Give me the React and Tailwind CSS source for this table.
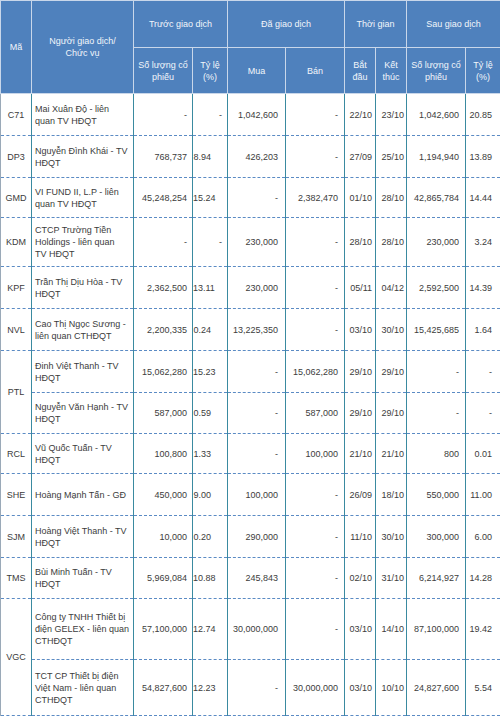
import React from "react";

const ROWS = [
  { code: "C71", span: 1, h: "h-[42px]", name: ["Mai Xuân Độ - liên", "quan TV HĐQT"], v: ["-", "-", "1,042,600", "-", "22/10", "23/10", "1,042,600", "20.85"] },
  { code: "DP3", span: 1, h: "h-[42px]", name: ["Nguyễn Đình Khái - TV", "HĐQT"], v: ["768,737", "8.94", "426,203", "-", "27/09", "25/10", "1,194,940", "13.89"] },
  { code: "GMD", span: 1, h: "h-[40px]", name: ["VI FUND II, L.P - liên", "quan TV HĐQT"], v: ["45,248,254", "15.24", "-", "2,382,470", "01/10", "28/10", "42,865,784", "14.44"] },
  { code: "KDM", span: 1, h: "h-[49px]", name: ["CTCP Trường Tiền", "Holdings - liên quan", "TV HĐQT"], v: ["-", "-", "230,000", "-", "28/10", "28/10", "230,000", "3.24"] },
  { code: "KPF", span: 1, h: "h-[42px]", name: ["Trần Thị Dịu Hòa - TV", "HĐQT"], v: ["2,362,500", "13.11", "230,000", "-", "05/11", "04/12", "2,592,500", "14.39"] },
  { code: "NVL", span: 1, h: "h-[42px]", name: ["Cao Thị Ngọc Sương -", "liên quan CTHĐQT"], v: ["2,200,335", "0.24", "13,225,350", "-", "03/10", "30/10", "15,425,685", "1.64"] },
  { code: "PTL", span: 2, h: "h-[42px]", name: ["Đinh Việt Thanh - TV", "HĐQT"], v: ["15,062,280", "15.23", "-", "15,062,280", "29/10", "29/10", "-", "-"] },
  { code: null, h: "h-[41px]", name: ["Nguyễn Văn Hạnh - TV", "HĐQT"], v: ["587,000", "0.59", "-", "587,000", "29/10", "29/10", "-", "-"] },
  { code: "RCL", span: 1, h: "h-[40px]", name: ["Vũ Quốc Tuấn - TV", "HĐQT"], v: ["100,800", "1.33", "-", "100,000", "21/10", "21/10", "800", "0.01"] },
  { code: "SHE", span: 1, h: "h-[42px]", name: ["Hoàng Mạnh Tấn - GĐ"], v: ["450,000", "9.00", "100,000", "-", "26/09", "18/10", "550,000", "11.00"] },
  { code: "SJM", span: 1, h: "h-[42px]", name: ["Hoàng Việt Thanh - TV", "HĐQT"], v: ["10,000", "0.20", "290,000", "-", "11/10", "30/10", "300,000", "6.00"] },
  { code: "TMS", span: 1, h: "h-[41px]", name: ["Bùi Minh Tuấn - TV", "HĐQT"], v: ["5,969,084", "10.88", "245,843", "-", "02/10", "31/10", "6,214,927", "14.28"] },
  { code: "VGC", span: 2, h: "h-[61px]", name: ["Công ty TNHH Thiết bị", "điện GELEX - liên quan", "CTHĐQT"], v: ["57,100,000", "12.74", "30,000,000", "-", "03/10", "14/10", "87,100,000", "19.42"] },
  { code: null, h: "h-[56px]", name: ["TCT CP Thiết bị điện", "Việt Nam - liên quan", "CTHĐQT"], v: ["54,827,600", "12.23", "-", "30,000,000", "03/10", "10/10", "24,827,600", "5.54"] },
];

const cell =
  "border-x border-x-[#3a8aa0] border-b border-b-[#5b8bc4] [border-bottom-style:dashed] align-middle";

// padding per value column
const PAD = ["pr-[5px]", "pr-[16px]", "pr-[7px]", "pr-[6px]", "pr-[3px]", "pr-[2px]", "pr-[6px]", "pr-[8px]"];

const hd = "border border-[#c9d7ea] bg-[#4f81bd] text-[#f2f6fb] text-center align-middle font-normal";

export default function App() {
  return (
    <div className="w-[500px] h-[721px] bg-white font-['Liberation_Sans',Arial,sans-serif] text-[9px] leading-[12px] text-[#3c3c3c]">
      <table className="table-fixed border-collapse w-[500px]">
        <colgroup>
          <col className="w-[31px]" />
          <col className="w-[102px]" />
          <col className="w-[59px]" />
          <col className="w-[35px]" />
          <col className="w-[58px]" />
          <col className="w-[59px]" />
          <col className="w-[31px]" />
          <col className="w-[31px]" />
          <col className="w-[59px]" />
          <col className="w-[35px]" />
        </colgroup>
        <thead>
          <tr className="h-[47px]">
            <th rowSpan={2} className={hd}>Mã</th>
            <th rowSpan={2} className={hd}>
              Người giao dịch/
              <br />
              Chức vụ
            </th>
            <th colSpan={2} className={hd}>Trước giao dịch</th>
            <th colSpan={2} className={hd}>Đã giao dịch</th>
            <th colSpan={2} className={hd}>Thời gian</th>
            <th colSpan={2} className={hd}>Sau giao dịch</th>
          </tr>
          <tr className="h-[46px]">
            <th className={hd}>Số lượng cổ<br />phiếu</th>
            <th className={hd}>Tỷ lệ<br />(%)</th>
            <th className={hd}>Mua</th>
            <th className={hd}>Bán</th>
            <th className={hd}>Bắt<br />đầu</th>
            <th className={hd}>Kết<br />thúc</th>
            <th className={hd}>Số lượng cổ<br />phiếu</th>
            <th className={hd}>Tỷ lệ<br />(%)</th>
          </tr>
        </thead>
        <tbody>
          {ROWS.map((r, i) => (
            <tr key={i} className={r.h}>
              {r.code && (
                <td rowSpan={r.span} className={`${cell} text-center border-l-[#9aa9b8] border-b-[#3a6fa8]`}>
                  {r.code}
                </td>
              )}
              <td className={`${cell} pl-[3px]`}>
                {r.name.map((l, j) => (
                  <div key={j}>{l}</div>
                ))}
              </td>
              {r.v.map((v, j) => (
                <td
                  key={j}
                  className={`${cell} text-right ${j === 1 && v === "-" ? "pr-[5px]" : PAD[j]}`}
                >
                  {v}
                </td>
              ))}
            </tr>
          ))}
        </tbody>
      </table>
    </div>
  );
}
